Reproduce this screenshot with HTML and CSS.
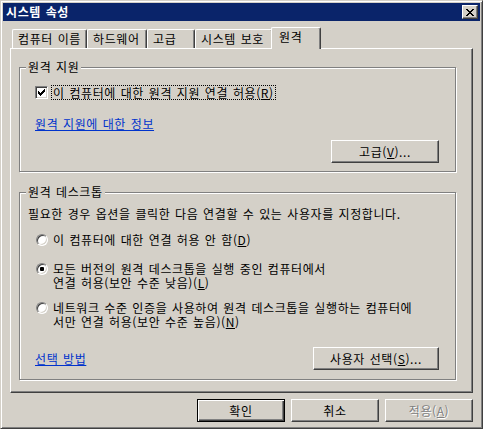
FILE: index.html
```html
<!DOCTYPE html>
<html lang="ko">
<head>
  <meta charset="UTF-8">
  <title>시스템 속성</title>
  <link rel="stylesheet" href="styles.css">
</head>
<body>
  <div class="window">
    <div class="titlebar">
      <span class="title">시스템 속성</span>
      <span class="close">
        <svg width="8" height="7" viewBox="0 0 8 7" shape-rendering="crispEdges"><path d="M0 0h2v1h-2zM6 0h2v1h-2zM1 1h2v1h-2zM5 1h2v1h-2zM2 2h4v1h-4zM3 3h2v1h-2zM2 4h4v1h-4zM1 5h2v1h-2zM5 5h2v1h-2zM0 6h2v1h-2zM6 6h2v1h-2z" fill="#000"/></svg>
      </span>
    </div>

    <div class="dialog-body">
      <div class="tabs">
        <div class="tab tab-name">컴퓨터 이름</div>
        <div class="tab tab-hw">하드웨어</div>
        <div class="tab tab-adv">고급</div>
        <div class="tab tab-prot">시스템 보호</div>
        <div class="tab tab-remote active">원격</div>
      </div>

      <div class="panel">
        <div class="group group-assist">
          <div class="group-title">원격 지원</div>
          <div class="check-row">
            <span class="checkbox">
              <svg width="7" height="7" viewBox="0 0 7 7" shape-rendering="crispEdges"><path d="M6 0h1v1h-1zM5 1h2v1h-2zM0 2h1v1h-1zM4 2h3v1h-3zM0 3h2v1h-2zM3 3h3v1h-3zM0 4h5v1h-5zM1 5h3v1h-3zM2 6h1v1h-1z" fill="#000"/></svg>
            </span>
            <span class="check-label">이 컴퓨터에 대한 원격 지원 연결 허용(<u>R</u>)</span>
          </div>
          <a class="link link-assist" href="#">원격 지원에 대한 정보</a>
          <div class="btn-row">
            <button class="btn btn-adv">고급(<u>V</u>)...</button>
          </div>
        </div>

        <div class="group group-desktop">
          <div class="group-title">원격 데스크톱</div>
          <p class="desc">필요한 경우 옵션을 클릭한 다음 연결할 수 있는 사용자를 지정합니다.</p>
          <div class="option option-first">
            <span class="radio"></span>
            <span class="option-text">이 컴퓨터에 대한 연결 허용 안 함(<u>D</u>)</span>
          </div>
          <div class="option option-second">
            <span class="radio checked"><span class="dot"></span></span>
            <span class="option-text">모든 버전의 원격 데스크톱을 실행 중인 컴퓨터에서<br>연결 허용(보안 수준 낮음)(<u>L</u>)</span>
          </div>
          <div class="option option-third">
            <span class="radio"></span>
            <span class="option-text">네트워크 수준 인증을 사용하여 원격 데스크톱을 실행하는 컴퓨터에<br>서만 연결 허용(보안 수준 높음)(<u>N</u>)</span>
          </div>
          <div class="bottom-row">
            <a class="link" href="#">선택 방법</a>
            <button class="btn btn-users">사용자 선택(<u>S</u>)...</button>
          </div>
        </div>
      </div>

      <div class="actions">
        <button class="btn btn-default">확인</button>
        <button class="btn">취소</button>
        <button class="btn btn-disabled">적용(<u>A</u>)</button>
      </div>
    </div>
  </div>
</body>
</html>
```

FILE: styles.css
```css
body {
  margin: 0;
  padding: 0;
  font-family: "Noto Sans CJK KR", "Noto Sans", sans-serif;
  font-size: 12px;
  letter-spacing: 0.6px;
  word-spacing: 0.8px;
  color: #000;
  background-color: #d4d0c8;
}
u {
  text-decoration: underline;
}
.window {
  width: 483px;
  height: 429px;
  box-sizing: border-box;
  background: #d4d0c8;
  border: 1px solid;
  border-color: #d4d0c8 #404040 #404040 #d4d0c8;
  box-shadow: inset 1px 1px #fff, inset -1px -1px #808080;
  padding: 2px;
  display: flex;
  flex-direction: column;
}
.titlebar {
  height: 18px;
  flex-shrink: 0;
  background: #0a246a;
  color: #fff;
  font-weight: bold;
  display: flex;
  align-items: center;
  justify-content: space-between;
  padding: 0 2px 0 3px;
  line-height: 18px;
}
.close {
  width: 16px;
  height: 14px;
  box-sizing: border-box;
  background: #d4d0c8;
  border: 1px solid;
  border-color: #fff #404040 #404040 #fff;
  box-shadow: inset -1px -1px #808080;
  display: flex;
  align-items: center;
  justify-content: center;
}
.close svg {
  display: block;
  margin-left: -1px;
}
.dialog-body {
  padding: 6px 7px 0 7px;
}
.tabs {
  display: flex;
  align-items: flex-end;
  height: 21px;
  padding-left: 2px;
}
.tab {
  box-sizing: border-box;
  height: 19px;
  border-top: 1px solid #fff;
  border-left: 1px solid #fff;
  border-right: 1px solid #404040;
  box-shadow: inset -1px 0 #808080;
  border-radius: 2px 2px 0 0;
  padding-left: 5px;
  line-height: 18px;
  white-space: nowrap;
}
.tab-name { width: 75px; }
.tab-hw { width: 60px; }
.tab-adv { width: 48px; }
.tab-prot { width: 78px; }
.tab.active {
  width: 50px;
  height: 22px;
  margin: 0 -2px -1px -2px;
  padding-left: 7px;
  line-height: 18px;
  position: relative;
  z-index: 1;
  background: #d4d0c8;
}
.panel {
  height: 345px;
  box-sizing: border-box;
  border-top: 1px solid #fff;
  border-left: 1px solid #fff;
  border-right: 1px solid #404040;
  border-bottom: 1px solid #404040;
  box-shadow: inset -1px -1px #808080;
  padding: 18px 0 0 8px;
}
.group {
  width: 437px;
  box-sizing: border-box;
  border: 1px solid #808080;
  box-shadow: inset 1px 1px #fff, 1px 1px #fff;
}
.group-assist {
  height: 105px;
}
.group-desktop {
  height: 188px;
  margin-top: 20px;
}
.group-title {
  width: max-content;
  height: 14px;
  line-height: 14px;
  margin: -8px 0 0 6px;
  padding: 0 2px;
  background: #d4d0c8;
}
.check-row {
  display: flex;
  align-items: center;
  height: 14px;
  margin: 11px 0 0 15px;
}
.checkbox {
  width: 13px;
  height: 13px;
  box-sizing: border-box;
  background: #fff;
  border: 1px solid;
  border-color: #808080 #fff #fff #808080;
  box-shadow: inset 1px 1px #404040, inset -1px -1px #d4d0c8;
  display: flex;
  align-items: center;
  justify-content: center;
}
.checkbox svg {
  display: block;
}
.check-label {
  margin-left: 4px;
  padding: 0 1px;
  line-height: 13px;
  outline: 1px dotted #000;
}
.link {
  color: #0033cc;
  text-decoration: underline;
  line-height: 14px;
}
.link-assist {
  display: block;
  width: max-content;
  margin: 18px 0 0 15px;
}
.btn-row {
  display: flex;
  justify-content: flex-end;
  margin-top: 9px;
  padding-right: 16px;
}
.btn {
  font-family: inherit;
  font-size: 12px;
  letter-spacing: 0.6px;
  word-spacing: 0.8px;
  color: #000;
  width: 88px;
  height: 23px;
  box-sizing: border-box;
  background: #d4d0c8;
  border: 1px solid;
  border-color: #fff #404040 #404040 #fff;
  box-shadow: inset -1px -1px #808080;
  padding: 0;
  line-height: 20px;
  white-space: nowrap;
}
.btn-adv {
  width: 108px;
}
.btn-users {
  width: 126px;
}
.btn-default {
  border-color: #000;
  box-shadow: inset 1px 1px #fff, inset -1px -1px #404040, inset -2px -2px #808080;
}
.btn-disabled {
  color: #808080;
  text-shadow: 1px 1px #fff;
}
.desc {
  margin: 8px 0 0 8px;
  line-height: 14px;
}
.option {
  display: flex;
  align-items: flex-start;
  margin-left: 16px;
  line-height: 14px;
}
.option-first { margin-top: 12px; }
.option-second { margin-top: 15px; }
.option-third { margin-top: 11px; }
.radio {
  flex-shrink: 0;
  width: 12px;
  height: 12px;
  box-sizing: border-box;
  margin-top: 1px;
  border-radius: 50%;
  background: #fff;
  border: 1px solid;
  border-color: #808080 #fff #fff #808080;
  box-shadow: inset 1px 1px #404040, inset -1px -1px #d4d0c8;
  display: flex;
  align-items: center;
  justify-content: center;
}
.dot {
  width: 4px;
  height: 4px;
  border-radius: 1px;
  background: #000;
}
.option-text {
  margin-left: 5px;
  white-space: nowrap;
}
.bottom-row {
  display: flex;
  align-items: center;
  justify-content: space-between;
  margin: 18px 0 0 15px;
  padding-right: 16px;
}
.actions {
  display: flex;
  justify-content: flex-end;
  gap: 6px;
  margin-top: 6px;
}
```
